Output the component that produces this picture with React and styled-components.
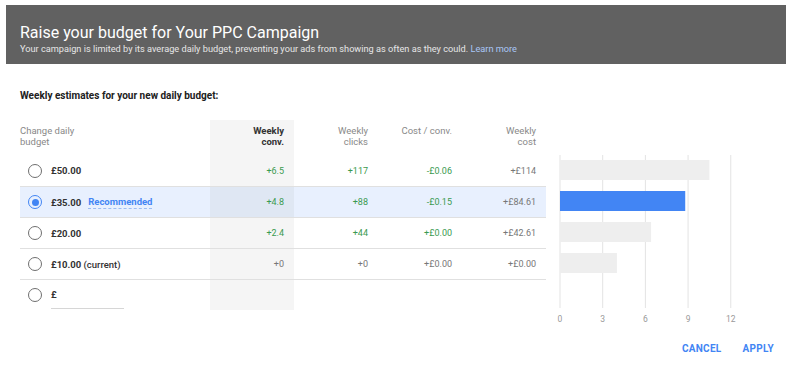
import React from "react";
import styled, { createGlobalStyle } from "styled-components";

const Global = createGlobalStyle`
  body {
    margin: 0;
    background: #ffffff;
    font-family: Roboto, "Liberation Sans", Arial, sans-serif;
    color: #333;
  }
`;

const Page = styled.div`
  width: 794px;
  height: 368px;
  overflow: hidden;
`;

const Banner = styled.div`
  margin: 5px 8px 0 6px;
  height: 59px;
  box-sizing: border-box;
  background: #616161;
  padding: 18px 14px 0;
  color: #fff;
`;

const Title = styled.div`
  font-size: 16px;
  line-height: 20px;
  font-weight: 400;
`;

const Sub = styled.div`
  font-size: 9.2px;
  line-height: 14px;
  margin-top: -1px;
  color: #e6e6e6;
  a {
    color: #a9c6f6;
    text-decoration: none;
  }
`;

const Body = styled.div`
  padding: 0 20px;
`;

const Lead = styled.div`
  font-size: 10px;
  font-weight: 700;
  color: #212121;
  margin-top: 26px;
  line-height: 12px;
`;

const Main = styled.div`
  display: flex;
  align-items: flex-start;
  margin-top: 18px;
`;

const Table = styled.div`
  width: 527px;
  display: grid;
  grid-template-columns: 190px repeat(4, 84px);
  font-size: 9px;
`;

const HeadCell = styled.div`
  height: 35px;
  padding: 5px 10px 0 0;
  box-sizing: border-box;
  text-align: ${(p) => (p.$first ? "left" : "right")};
  color: ${(p) => (p.$dark ? "#333" : "#888")};
  font-weight: ${(p) => (p.$dark ? 700 : 400)};
  line-height: 11px;
  font-size: 9.5px;
  background: ${(p) => (p.$shade ? "#f5f5f5" : "transparent")};
`;

const Cell = styled.div`
  height: 31px;
  box-sizing: border-box;
  display: flex;
  align-items: center;
  justify-content: ${(p) => (p.$first ? "flex-start" : "flex-end")};
  padding-right: ${(p) => (p.$first ? "0" : "10px")};
  border-top: ${(p) => (p.$line ? "1px solid #e0e0e0" : "none")};
  background: ${(p) =>
    p.$sel ? (p.$shade ? "#dfe7f3" : "#e8f0fe") : p.$shade ? "#f5f5f5" : "transparent"};
  color: ${(p) => (p.$green ? "#3a9a50" : "#777")};
`;

const Radio = styled.span`
  width: 14px;
  height: 14px;
  box-sizing: border-box;
  border-radius: 50%;
  border: 1.5px solid ${(p) => (p.$on ? "#4285f4" : "#6f6f6f")};
  margin: 0 9px 0 8px;
  display: flex;
  align-items: center;
  justify-content: center;
  &::after {
    content: "";
    display: ${(p) => (p.$on ? "block" : "none")};
    width: 7px;
    height: 7px;
    border-radius: 50%;
    background: #4285f4;
  }
`;

const Amount = styled.span`
  font-size: 9.5px;
  font-weight: 700;
  color: #333;
`;

const Current = styled.span`
  font-weight: 500;
`;

const Rec = styled.span`
  margin-left: 7px;
  font-size: 9.5px;
  font-weight: 700;
  color: #4285f4;
  border-bottom: 1px dashed #9bbcf5;
  line-height: 12px;
`;

const Entry = styled.span`
  display: inline-block;
  width: 73px;
  font-size: 9.5px;
  font-weight: 700;
  color: #333;
  padding-bottom: 8px;
  margin-top: 8px;
  border-bottom: 1px solid #d6d6d6;
`;

const Actions = styled.div`
  display: flex;
  justify-content: flex-end;
  gap: 21px;
  margin-top: 8px;
`;

const Btn = styled.button`
  border: 0;
  background: none;
  padding: 0;
  font-family: Roboto, "Liberation Sans", Arial, sans-serif;
  font-size: 10px;
  font-weight: 700;
  letter-spacing: 0.3px;
  color: #4285f4;
`;

const rows = [
  { amt: "£50.00", conv: "+6.5", clicks: "+117", cpc: "-£0.06", cost: "+£114", g: [1, 1, 1, 0] },
  { amt: "£35.00", rec: true, conv: "+4.8", clicks: "+88", cpc: "-£0.15", cost: "+£84.61", g: [1, 1, 1, 0] },
  { amt: "£20.00", conv: "+2.4", clicks: "+44", cpc: "+£0.00", cost: "+£42.61", g: [1, 1, 1, 0] },
  { amt: "£10.00", cur: true, conv: "+0", clicks: "+0", cpc: "+£0.00", cost: "+£0.00", g: [0, 0, 0, 0] },
];

const bars = [10.5, 8.8, 6.4, 4.0];

function Chart() {
  const x0 = 10;
  const unit = 14.23;
  return (
    <svg width="200" height="215" style={{ marginLeft: 3 }}>
      {[0, 3, 6, 9, 12].map((t) => (
        <g key={t}>
          <line x1={x0 + t * unit} x2={x0 + t * unit} y1="35" y2="188" stroke="#e3e3e3" strokeWidth="1" />
          <text
            x={x0 + t * unit}
            y="202"
            fontSize="8.5"
            fill="#999"
            textAnchor="middle"
            fontFamily="Roboto, sans-serif"
          >
            {t}
          </text>
        </g>
      ))}
      {bars.map((v, i) => (
        <rect
          key={i}
          x={x0}
          y={40 + i * 31}
          width={v * unit}
          height="20"
          fill={i === 1 ? "#4285f4" : "#eeeeee"}
        />
      ))}
    </svg>
  );
}

export default function App() {
  return (
    <Page>
      <Global />
      <Banner>
        <Title>Raise your budget for Your PPC Campaign</Title>
        <Sub>
          Your campaign is limited by its average daily budget, preventing your ads from showing as often as they could.{" "}
          <a href="#">Learn more</a>
        </Sub>
      </Banner>
      <Body>
        <Lead>Weekly estimates for your new daily budget:</Lead>
        <Main>
          <Table>
            <HeadCell $first>
              Change daily
              <br />
              budget
            </HeadCell>
            <HeadCell $dark $shade>
              Weekly
              <br />
              conv.
            </HeadCell>
            <HeadCell>
              Weekly
              <br />
              clicks
            </HeadCell>
            <HeadCell>Cost / conv.</HeadCell>
            <HeadCell>
              Weekly
              <br />
              cost
            </HeadCell>
            {rows.map((r, i) => {
              const sel = !!r.rec;
              const line = i > 0;
              return (
                <React.Fragment key={r.amt}>
                  <Cell $first $sel={sel} $line={line}>
                    <Radio $on={sel} />
                    <Amount>
                      {r.amt}
                      {r.cur && <Current> (current)</Current>}
                    </Amount>
                    {r.rec && <Rec>Recommended</Rec>}
                  </Cell>
                  <Cell $shade $sel={sel} $line={line} $green={r.g[0]}>
                    {r.conv}
                  </Cell>
                  <Cell $sel={sel} $line={line} $green={r.g[1]}>
                    {r.clicks}
                  </Cell>
                  <Cell $sel={sel} $line={line} $green={r.g[2]}>
                    {r.cpc}
                  </Cell>
                  <Cell $sel={sel} $line={line} $green={r.g[3]}>
                    {r.cost}
                  </Cell>
                </React.Fragment>
              );
            })}
            <Cell $first $line>
              <Radio />
              <Entry>£</Entry>
            </Cell>
            <Cell $shade $line />
            <Cell $line />
            <Cell $line />
            <Cell $line />
          </Table>
          <Chart />
        </Main>
        <Actions>
          <Btn>CANCEL</Btn>
          <Btn>APPLY</Btn>
        </Actions>
      </Body>
    </Page>
  );
}
